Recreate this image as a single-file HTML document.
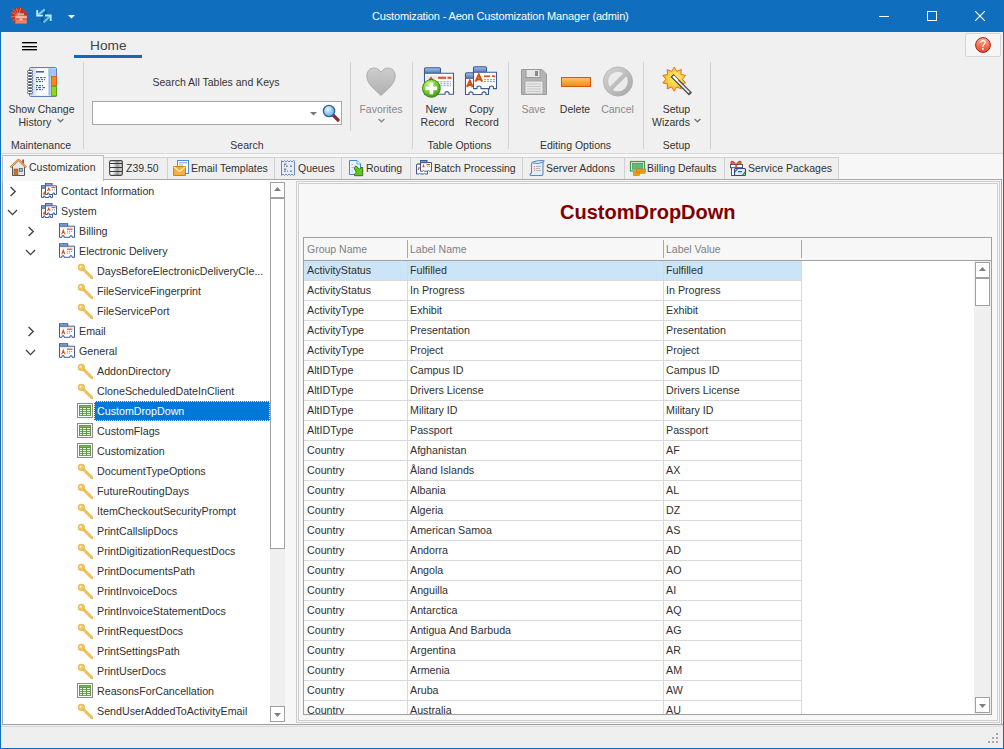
<!DOCTYPE html><html><head><meta charset="utf-8"><style>
*{margin:0;padding:0;box-sizing:border-box}
html,body{width:1004px;height:749px;overflow:hidden;background:#f0f0f0;font-family:"Liberation Sans", sans-serif;font-size:10.5px;color:#303030}
.a{position:absolute}
svg{display:block}
.t{position:absolute;white-space:nowrap;line-height:12px}
</style></head><body><div class="a" style="left:0;top:0;width:1004px;height:749px;background:#f0f0f0"></div><div class="a" style="left:0;top:0;width:1004px;height:32px;background:#106ebe"></div><div class="a" style="left:0;top:0;width:1px;height:749px;background:#106ebe"></div><div class="a" style="left:1003px;top:0;width:1px;height:749px;background:#106ebe"></div><div class="a" style="left:0;top:748px;width:1004px;height:1px;background:#106ebe"></div><svg class="a" style="left:8px;top:5px" width="22" height="22" viewBox="8 5 22 22"><circle cx="19" cy="15.7" r="7.9" fill="#c7321a"/><path d="M19 15.7 L13 9.5 M19 15.7 L16.5 8.3 M19 15.7 L20.5 8 M19 15.7 L11.5 12.5 M19 15.7 L11 17" stroke="#e8876c" stroke-width="0.8"/><path d="M19 15.7 L12.5 21" stroke="#e8876c" stroke-width="0.6"/><rect x="15.3" y="15.8" width="11.5" height="7.8" fill="#f47d62"/><rect x="15.3" y="15.8" width="11.5" height="2.6" fill="#f9b4a0"/><rect x="15.3" y="18.6" width="11.5" height="0.9" fill="#c9402a"/><rect x="17.5" y="13.3" width="6.5" height="2" fill="#b8b8b8"/><ellipse cx="21" cy="19.4" rx="1.7" ry="1.1" fill="#c8c8c8"/></svg><svg class="a" style="left:34px;top:6px" width="20" height="20" viewBox="34 6 20 20"><path d="M44.5 9.5 Q47.5 12 44.5 15.5" stroke="#0d4f78" stroke-width="1.6" fill="none"/><path d="M43 22 Q40.5 19.5 42.8 16.3" stroke="#0d4f78" stroke-width="1.6" fill="none"/><path d="M44.8 9.3 L38 15" stroke="#72d0f5" stroke-width="2.2"/><path d="M37.2 10 V15.6 H42.8" stroke="#c6f0ff" stroke-width="1.8" fill="none"/><path d="M43.5 22.5 L50 16.3" stroke="#5cc4ee" stroke-width="2.2"/><path d="M45 15.5 H50.7 V21" stroke="#b6ecff" stroke-width="1.8" fill="none"/></svg><svg class="a" style="left:68px;top:15px" width="7" height="4" viewBox="0 0 7 4"><path d="M0 0 H7 L3.5 3.5 Z" fill="#fff"/></svg><div class="t" style="left:372px;top:10px;color:#fff;font-size:11px;letter-spacing:-0.15px">Customization - Aeon Customization Manager (admin)</div><div class="a" style="left:879px;top:16px;width:10px;height:1px;background:#fff"></div><div class="a" style="left:927px;top:11px;width:10px;height:10px;border:1px solid #fff"></div><svg class="a" style="left:975px;top:11px" width="10" height="10" viewBox="0 0 10 10"><path d="M0 0 L10 10 M10 0 L0 10" stroke="#fff" stroke-width="1.1"/></svg><div class="a" style="left:22px;top:42px;width:15px;height:1px;background:#000;box-shadow:0 1px 0 rgba(0,0,0,0.35)"></div><div class="a" style="left:22px;top:46px;width:15px;height:1px;background:#000;box-shadow:0 1px 0 rgba(0,0,0,0.35)"></div><div class="a" style="left:22px;top:49px;width:15px;height:1px;background:#000;box-shadow:0 1px 0 rgba(0,0,0,0.35)"></div><div class="t" style="left:90px;top:40px;font-size:13.7px;color:#444">Home</div><div class="a" style="left:74px;top:55px;width:68px;height:3px;background:#1468bc"></div><div class="a" style="left:965px;top:33px;width:36px;height:24px;background:#f6f6f6;border:1px solid #d6d6d6;border-radius:2px"></div><svg class="a" style="left:974px;top:36px" width="18" height="18" viewBox="0 0 18 18"><defs><linearGradient id="hg" x1="0" y1="0" x2="0" y2="1"><stop offset="0" stop-color="#fbb196"/><stop offset="0.5" stop-color="#f27755"/><stop offset="1" stop-color="#e4502c"/></linearGradient></defs><circle cx="9" cy="9" r="7.4" fill="url(#hg)" stroke="#a81a10" stroke-width="1"/><path d="M6.9 6.7 Q6.9 4.6 9.1 4.6 Q11.2 4.6 11.2 6.6 Q11.2 7.8 9.8 8.6 Q9 9.2 9 11" stroke="#fff" stroke-width="1.2" fill="none"/><circle cx="8.9" cy="13" r="0.9" fill="#fff"/></svg><div class="a" style="left:83px;top:62px;width:1px;height:87px;background:#d2d2d2"></div><div class="a" style="left:350px;top:62px;width:1px;height:69px;background:#d2d2d2"></div><div class="a" style="left:412px;top:62px;width:1px;height:87px;background:#d2d2d2"></div><div class="a" style="left:508px;top:62px;width:1px;height:87px;background:#d2d2d2"></div><div class="a" style="left:643px;top:62px;width:1px;height:87px;background:#d2d2d2"></div><div class="a" style="left:710px;top:62px;width:1px;height:87px;background:#d2d2d2"></div><svg class="a" style="left:24px;top:64px" width="36" height="36" viewBox="24 64 36 36"><defs><linearGradient id="nb" x1="0" x2="1"><stop offset="0" stop-color="#b9c8e4"/><stop offset="0.45" stop-color="#fff"/></linearGradient></defs><rect x="29.5" y="67.5" width="27" height="29" rx="1.2" fill="#dbe6f6" stroke="#5b7fb8" stroke-width="1"/><rect x="30.5" y="68.5" width="18" height="27" fill="url(#nb)"/><rect x="48.5" y="68.5" width="7.5" height="8" fill="#a8c4ee"/><rect x="48.5" y="68.5" width="2" height="27" fill="#9dbbe8"/><rect x="51.5" y="76.5" width="5" height="9" fill="#f58a12" stroke="#d65a0a" stroke-width="0.8"/><rect x="51.5" y="86.5" width="5" height="9.5" fill="#8ed81a" stroke="#5a9a12" stroke-width="0.8"/><rect x="36" y="71" width="8" height="1.6" fill="#3f66b0"/><rect x="36" y="77" width="3" height="1.2" fill="#3f66b0"/><rect x="40" y="77" width="2.5" height="1.2" fill="#3f66b0"/><rect x="43.5" y="77" width="2.0" height="1.2" fill="#3f66b0"/><rect x="36" y="79" width="1" height="1.2" fill="#3f66b0"/><rect x="38" y="79" width="2" height="1.2" fill="#3f66b0"/><rect x="41" y="79" width="2" height="1.2" fill="#3f66b0"/><rect x="44" y="79" width="1" height="1.2" fill="#3f66b0"/><rect x="36" y="81" width="2" height="1.2" fill="#3f66b0"/><rect x="39" y="81" width="2" height="1.2" fill="#3f66b0"/><rect x="42" y="81" width="1" height="1.2" fill="#3f66b0"/><rect x="36" y="85" width="2" height="1.2" fill="#3f66b0"/><rect x="39" y="85" width="2" height="1.2" fill="#3f66b0"/><rect x="42" y="85" width="1" height="1.2" fill="#3f66b0"/><rect x="36" y="87" width="1" height="1.2" fill="#3f66b0"/><rect x="38" y="87" width="3" height="1.2" fill="#3f66b0"/><rect x="42.5" y="87" width="2.5" height="1.2" fill="#3f66b0"/><rect x="36" y="89" width="2" height="1.2" fill="#3f66b0"/><rect x="39" y="89" width="2" height="1.2" fill="#3f66b0"/><rect x="42" y="89" width="1" height="1.2" fill="#3f66b0"/><rect x="27.5" y="70.5" width="5" height="2.2" rx="1" fill="#fff" stroke="#3a4866" stroke-width="0.9"/><rect x="27.5" y="73.5" width="5" height="2.2" rx="1" fill="#fff" stroke="#3a4866" stroke-width="0.9"/><rect x="27.5" y="76.5" width="5" height="2.2" rx="1" fill="#fff" stroke="#3a4866" stroke-width="0.9"/><rect x="27.5" y="79.5" width="5" height="2.2" rx="1" fill="#fff" stroke="#3a4866" stroke-width="0.9"/><rect x="27.5" y="82.5" width="5" height="2.2" rx="1" fill="#fff" stroke="#3a4866" stroke-width="0.9"/><rect x="27.5" y="85.5" width="5" height="2.2" rx="1" fill="#fff" stroke="#3a4866" stroke-width="0.9"/><rect x="27.5" y="88.5" width="5" height="2.2" rx="1" fill="#fff" stroke="#3a4866" stroke-width="0.9"/><rect x="27.5" y="91.5" width="5" height="2.2" rx="1" fill="#fff" stroke="#3a4866" stroke-width="0.9"/></svg><div class="t" style="left:41.5px;top:103px;width:0;color:#333;"><div style="position:absolute;left:0;transform:translateX(-50%);white-space:nowrap">Show Change</div></div><div class="t" style="left:18.5px;top:116px;color:#333;">History</div><svg class="a" style="left:57px;top:118px" width="7" height="5" viewBox="0 0 7 5"><path d="M0.6 0.9 L3.5 3.8 L6.4 0.9" stroke="#777" stroke-width="1.4" fill="none"/></svg><div class="t" style="left:41px;top:139px;width:0;color:#333;"><div style="position:absolute;left:0;transform:translateX(-50%);white-space:nowrap">Maintenance</div></div><div class="t" style="left:216px;top:76px;width:0;color:#333;"><div style="position:absolute;left:0;transform:translateX(-50%);white-space:nowrap">Search All Tables and Keys</div></div><div class="a" style="left:92px;top:101px;width:250px;height:24px;background:#fff;border:1px solid #a8a8a8"></div><svg class="a" style="left:310px;top:112px" width="7" height="4" viewBox="0 0 7 4"><path d="M0 0 H7 L3.5 3.5 Z" fill="#777"/></svg><svg class="a" style="left:322px;top:104px" width="18" height="18" viewBox="0 0 18 18"><defs><radialGradient id="mg" cx="0.4" cy="0.35" r="0.7"><stop offset="0" stop-color="#e8f6ff"/><stop offset="1" stop-color="#5fa6dd"/></radialGradient></defs><path d="M10.5 10.5 L16 16" stroke="#8a2c2c" stroke-width="3.2" stroke-linecap="round"/><circle cx="7" cy="7" r="5.6" fill="url(#mg)" stroke="#2a63a8" stroke-width="1.4"/></svg><div class="t" style="left:247px;top:139px;width:0;color:#333;"><div style="position:absolute;left:0;transform:translateX(-50%);white-space:nowrap">Search</div></div><svg class="a" style="left:365px;top:67px" width="32" height="31" viewBox="0 0 32 31"><defs><linearGradient id="hrt" x1="0" y1="0" x2="0" y2="1"><stop offset="0" stop-color="#cdcdcd"/><stop offset="1" stop-color="#b0b0b0"/></linearGradient></defs><path d="M16 28.5 C9 22 1.8 16.5 1.8 8.8 C1.8 4 5.2 1 9.2 1 C12.6 1 14.8 3.2 16 5.4 C17.2 3.2 19.4 1 22.8 1 C26.8 1 30.2 4 30.2 8.8 C30.2 16.5 23 22 16 28.5 Z" fill="url(#hrt)" stroke="#a8a8a8" stroke-width="0.9"/></svg><div class="t" style="left:381px;top:103px;width:0;color:#8a8a8a;"><div style="position:absolute;left:0;transform:translateX(-50%);white-space:nowrap">Favorites</div></div><svg class="a" style="left:378px;top:118px" width="7" height="5" viewBox="0 0 7 5"><path d="M0.6 0.9 L3.5 3.8 L6.4 0.9" stroke="#8a8a8a" stroke-width="1.4" fill="none"/></svg><svg class="a" style="left:418px;top:62px" width="40" height="40" viewBox="418 62 40 40"><defs><linearGradient id="tb42473" x1="0" y1="0" x2="0" y2="1"><stop offset="0" stop-color="#a6c2ec"/><stop offset="1" stop-color="#4f74b4"/></linearGradient></defs><rect x="424.5" y="67.7" width="16" height="6" rx="1.2" fill="url(#tb42473)" stroke="#3d5a8c" stroke-width="1.1"/><path d="M424.5 73.2 H453.5 V94.3 H449 V92.7 Q447.0 90.7 445 92.7 V94.3 H424.5 Z" fill="#fff" stroke="#3d5a8c" stroke-width="1.1"/><rect x="426" y="75.5" width="26.5" height="3.6" fill="#e6e8ee"/><path d="M428.5 80 L431 76.5 L433.5 80 Z" fill="#d84a10"/><rect x="438" y="76.8" width="8" height="2" fill="#e0541a"/><rect x="447.5" y="76.8" width="4" height="2" fill="#e0541a"/><path d="M437 81.8 H451 M437 83.8 H451 M437 85.8 H451" stroke="#8a9ab8" stroke-width="1" stroke-dasharray="2.2 1"/><defs><radialGradient id="gp" cx="0.35" cy="0.25" r="0.8"><stop offset="0" stop-color="#c6f27a"/><stop offset="0.6" stop-color="#6cc82a"/><stop offset="1" stop-color="#3a9a12"/></radialGradient></defs><circle cx="431.4" cy="88.4" r="8.9" fill="url(#gp)" stroke="#2e8010" stroke-width="0.9"/><path d="M431.4 82.6 V94.2 M425.6 88.4 H437.2" stroke="#fff" stroke-width="3.6"/></svg><svg class="a" style="left:461px;top:62px" width="40" height="40" viewBox="461 62 40 40"><defs><linearGradient id="tb46578" x1="0" y1="0" x2="0" y2="1"><stop offset="0" stop-color="#a6c2ec"/><stop offset="1" stop-color="#4f74b4"/></linearGradient></defs><rect x="465.5" y="72.7" width="12" height="6" rx="1.2" fill="url(#tb46578)" stroke="#3d5a8c" stroke-width="1.1"/><path d="M465.5 78.2 H488.5 V94.5 H486 V92.9 Q484.0 90.9 482 92.9 V94.5 H473 V92.9 Q471.0 90.9 469 92.9 V94.5 H465.5 Z" fill="#fff" stroke="#3d5a8c" stroke-width="1.1"/><path d="M467 87 L469.8 80.8 L472.6 87 M468.2 85 H471.4" stroke="#d84a10" stroke-width="2" fill="none"/><defs><linearGradient id="tb47372" x1="0" y1="0" x2="0" y2="1"><stop offset="0" stop-color="#a6c2ec"/><stop offset="1" stop-color="#4f74b4"/></linearGradient></defs><rect x="473.5" y="66.7" width="13" height="6" rx="1.2" fill="url(#tb47372)" stroke="#3d5a8c" stroke-width="1.1"/><path d="M473.5 72.2 H496.5 V88.6 H493.5 V87.0 Q491.5 85.0 489.5 87.0 V88.6 H481 V87.0 Q479.0 85.0 477 87.0 V88.6 H473.5 Z" fill="#fff" stroke="#3d5a8c" stroke-width="1.1"/><path d="M475.5 81.6 L478.8 74.6 L482.1 81.6 M477 79.4 H480.6" stroke="#d84a10" stroke-width="2.1" fill="none"/><rect x="484" y="75.4" width="6" height="1.8" fill="#e0541a"/><rect x="492" y="75.4" width="3.2" height="1.8" fill="#e0541a"/><path d="M484 79.6 H495 M484 81.6 H495" stroke="#8a9ab8" stroke-width="1" stroke-dasharray="2 1"/></svg><div class="t" style="left:436px;top:103px;width:0;color:#333;"><div style="position:absolute;left:0;transform:translateX(-50%);white-space:nowrap">New</div></div><div class="t" style="left:437.5px;top:116px;width:0;color:#333;"><div style="position:absolute;left:0;transform:translateX(-50%);white-space:nowrap">Record</div></div><div class="t" style="left:481.5px;top:103px;width:0;color:#333;"><div style="position:absolute;left:0;transform:translateX(-50%);white-space:nowrap">Copy</div></div><div class="t" style="left:482px;top:116px;width:0;color:#333;"><div style="position:absolute;left:0;transform:translateX(-50%);white-space:nowrap">Record</div></div><div class="t" style="left:459.5px;top:139px;width:0;color:#333;"><div style="position:absolute;left:0;transform:translateX(-50%);white-space:nowrap">Table Options</div></div><svg class="a" style="left:520px;top:68px" width="28" height="28" viewBox="0 0 28 28"><path d="M1.5 1.5 H22 L26.5 6 V26.5 H1.5 Z" fill="#b3b3b3" stroke="#9a9a9a"/><rect x="6" y="1.5" width="14" height="8" fill="#e6e6e6" stroke="#9a9a9a"/><rect x="15" y="3" width="3" height="5" fill="#888"/><rect x="5" y="13" width="18" height="13" fill="#e8e8e8" stroke="#a8a8a8"/><path d="M7 16 H21 M7 18.5 H21 M7 21 H21 M7 23.5 H21" stroke="#c6c6c6" stroke-width="1"/></svg><div class="t" style="left:533.5px;top:103px;width:0;color:#8a8a8a;"><div style="position:absolute;left:0;transform:translateX(-50%);white-space:nowrap">Save</div></div><svg class="a" style="left:560px;top:76px" width="32" height="12" viewBox="0 0 32 12"><defs><linearGradient id="dl" x1="0" y1="0" x2="0" y2="1"><stop offset="0" stop-color="#ffc46a"/><stop offset="1" stop-color="#f08a10"/></linearGradient></defs><rect x="1.5" y="1.5" width="29" height="9" fill="url(#dl)" stroke="#d4580c" stroke-width="1"/></svg><div class="t" style="left:575px;top:103px;width:0;color:#333;"><div style="position:absolute;left:0;transform:translateX(-50%);white-space:nowrap">Delete</div></div><svg class="a" style="left:602px;top:66px" width="32" height="31" viewBox="0 0 32 31"><defs><linearGradient id="cg" x1="0" y1="0" x2="1" y2="1"><stop offset="0" stop-color="#d6d6d6"/><stop offset="1" stop-color="#a6a6a6"/></linearGradient></defs><circle cx="16" cy="15.5" r="14.6" fill="url(#cg)" stroke="#b0b0b0" stroke-width="0.8"/><circle cx="16" cy="15.5" r="9.8" fill="#ebebeb"/><path d="M23.5 8 L8.5 23" stroke="url(#cg)" stroke-width="4.2"/></svg><div class="t" style="left:617.5px;top:103px;width:0;color:#8a8a8a;"><div style="position:absolute;left:0;transform:translateX(-50%);white-space:nowrap">Cancel</div></div><div class="t" style="left:575.5px;top:139px;width:0;color:#333;"><div style="position:absolute;left:0;transform:translateX(-50%);white-space:nowrap">Editing Options</div></div><svg class="a" style="left:656px;top:62px" width="40" height="40" viewBox="656 62 40 40"><defs><radialGradient id="st" cx="0.55" cy="0.45" r="0.6"><stop offset="0" stop-color="#fff27a"/><stop offset="0.7" stop-color="#fbc533"/><stop offset="1" stop-color="#f0a020"/></radialGradient></defs><path d="M674.20 67.20 L676.73 71.40 L681.25 69.49 L680.83 74.38 L685.61 75.49 L682.40 79.20 L685.61 82.91 L680.83 84.02 L681.25 88.91 L676.73 87.00 L674.20 91.20 L671.67 87.00 L667.15 88.91 L667.57 84.02 L662.79 82.91 L666.00 79.20 L662.79 75.49 L667.57 74.38 L667.15 69.49 L671.67 71.40 Z" fill="url(#st)" stroke="#dc6a14" stroke-width="0.9" stroke-linejoin="miter"/><path d="M673.5 77 L689 92.5" stroke="#4a4a4a" stroke-width="4.2" stroke-linecap="square"/><path d="M673.8 77.3 L688.6 92.1" stroke="#e8e8e8" stroke-width="1.8" stroke-linecap="square"/><path d="M673.8 76.8 L677 80" stroke="#fff" stroke-width="2" stroke-linecap="square"/></svg><div class="t" style="left:676.5px;top:103px;width:0;color:#333;"><div style="position:absolute;left:0;transform:translateX(-50%);white-space:nowrap">Setup</div></div><div class="t" style="left:652px;top:116px;color:#333;">Wizards</div><svg class="a" style="left:694px;top:118px" width="7" height="5" viewBox="0 0 7 5"><path d="M0.6 0.9 L3.5 3.8 L6.4 0.9" stroke="#777" stroke-width="1.4" fill="none"/></svg><div class="t" style="left:676.5px;top:139px;width:0;color:#333;"><div style="position:absolute;left:0;transform:translateX(-50%);white-space:nowrap">Setup</div></div><div class="a" style="left:1px;top:153px;width:1002px;height:1px;background:#d6d6d6"></div><div class="a" style="left:1px;top:154px;width:1002px;height:25px;background:#f7f7f7"></div><div class="a" style="left:103px;top:179px;width:899px;height:1px;background:#a8a8a8"></div><div class="a" style="left:2px;top:180px;width:286px;height:545px;background:#fff"></div><div class="a" style="left:2px;top:180px;width:1px;height:545px;background:#a8a8a8"></div><div class="a" style="left:2px;top:155px;width:102px;height:26px;background:#f7f7f7;border:1px solid #bdbdbd;border-bottom:none"></div><svg class="a" style="left:8px;top:157px" width="20" height="20" viewBox="8 157 20 20"><rect x="22.3" y="159.5" width="1.6" height="4.5" fill="#c0282a"/><path d="M12.5 166 V175.5 H24.5 V166 L18.5 160.5 Z" fill="#e8e8e8" stroke="#555" stroke-width="1"/><path d="M10.3 167.5 L18.5 159.8 L26.2 167.5" fill="none" stroke="#c4843c" stroke-width="2.2" stroke-linejoin="round"/><path d="M10.3 167.5 L18.5 159.8 L26.2 167.5" fill="none" stroke="#f0c890" stroke-width="0.8"/><rect x="14" y="169" width="4" height="6.5" fill="#c07a30" stroke="#7a4a1a" stroke-width="0.5"/><rect x="19.5" y="168.5" width="3" height="3" fill="#8cc4f0" stroke="#555" stroke-width="0.7"/></svg><div class="t" style="left:29px;top:161px;color:#333">Customization</div><div class="a" style="left:104px;top:157px;width:64px;height:22px;background:#efefef;border:1px solid #d0d0d0;border-bottom:none;border-left:none"></div><svg class="a" style="left:107px;top:158px" width="20" height="20" viewBox="107 158 20 20"><defs><linearGradient id="dbg" x1="0" x2="1"><stop offset="0" stop-color="#fff"/><stop offset="0.25" stop-color="#f4f4f4"/><stop offset="0.6" stop-color="#9a9a9a"/><stop offset="0.9" stop-color="#d8d8d8"/><stop offset="1" stop-color="#aaa"/></linearGradient></defs><rect x="109.6" y="160.6" width="12.8" height="14.8" rx="1.6" fill="url(#dbg)" stroke="#444" stroke-width="1.1"/><path d="M110 163.5 H122 M110 167.5 H122 M110 171.5 H122" stroke="#3a3a3a" stroke-width="1"/></svg><div class="t" style="left:126px;top:162px;color:#333">Z39.50</div><div class="a" style="left:168px;top:157px;width:107px;height:22px;background:#efefef;border:1px solid #d0d0d0;border-bottom:none;border-left:none"></div><svg class="a" style="left:171px;top:158px" width="20" height="20" viewBox="171 158 20 20"><rect x="177.5" y="160.5" width="11" height="13" fill="#fff" stroke="#4d8ad8"/><rect x="179" y="162" width="8" height="1.5" fill="#9ec0ea"/><rect x="179" y="164.5" width="4" height="1" fill="#9ab"/><path d="M173.5 166.5 H185.5 V175.5 H173.5 Z" fill="#f4b040" stroke="#cf8412"/><path d="M173.8 166.8 L179.5 171.5 L185.2 166.8" fill="none" stroke="#fff3d0" stroke-width="1.1"/></svg><div class="t" style="left:191px;top:162px;color:#333">Email Templates</div><div class="a" style="left:275px;top:157px;width:67px;height:22px;background:#efefef;border:1px solid #d0d0d0;border-bottom:none;border-left:none"></div><svg class="a" style="left:279px;top:158px" width="20" height="20" viewBox="279 158 20 20"><path d="M281.5 160.5 L283 162 L284.5 160.5 L286 162 L287.5 160.5 L289 162 L290.5 160.5 L292 162 L293.5 160.5 L294.5 161 V175 L293.5 175.5 L292 174 L290.5 175.5 L289 174 L287.5 175.5 L286 174 L284.5 175.5 L283 174 L281.5 175.5 Z" fill="#e6edf9" stroke="#6b8bc0" stroke-width="1"/><rect x="284" y="163.6" width="2.2" height="1.2" fill="#55698a"/><rect x="284" y="165.6" width="0.9" height="1.1" fill="#55698a"/><rect x="286" y="165.6" width="1.8" height="1.1" fill="#55698a"/><rect x="290" y="165.6" width="2" height="1.1" fill="#55698a"/><rect x="284" y="168.6" width="2.2" height="1.2" fill="#55698a"/><rect x="284" y="170.6" width="1.8" height="1.1" fill="#55698a"/><rect x="287" y="170.6" width="0.9" height="1.1" fill="#55698a"/><rect x="290" y="170.6" width="2" height="1.1" fill="#55698a"/></svg><div class="t" style="left:298px;top:162px;color:#333">Queues</div><div class="a" style="left:342px;top:157px;width:69px;height:22px;background:#efefef;border:1px solid #d0d0d0;border-bottom:none;border-left:none"></div><svg class="a" style="left:347px;top:158px" width="20" height="20" viewBox="347 158 20 20"><path d="M349.5 160.5 H357 L360.5 164 V174.5 H349.5 Z" fill="#eaf3fc" stroke="#3c8ad4" stroke-width="1"/><path d="M357 160.5 V164 H360.5" fill="#fff" stroke="#3c8ad4" stroke-width="0.8"/><path d="M351.5 164.5 H353 M351.5 167.5 H353 M351.5 171 H353" stroke="#9ab" stroke-width="0.8"/><path d="M354 167.8 L356 165.8 L359.5 169.3 L361 167.5 H362.7 V175.7 H354.5 V174 L356.3 172.5 Z" fill="#5fc81c" stroke="#2e6a12" stroke-width="0.9"/></svg><div class="t" style="left:366px;top:162px;color:#333">Routing</div><div class="a" style="left:411px;top:157px;width:112px;height:22px;background:#efefef;border:1px solid #d0d0d0;border-bottom:none;border-left:none"></div><svg class="a" style="left:414px;top:158px" width="20" height="20" viewBox="414 158 20 20"><path d="M416.5 164.5 H427.5 V174 H425.5 Q424.5 172.5 423.5 174 H420.5 Q419.5 172.5 418.5 174 H416.5 Z" fill="#fff" stroke="#3d5a8c" stroke-width="1"/><rect x="417" y="163" width="4" height="1.8" fill="#7b9ad0"/><path d="M418.2 170 L419.2 167" stroke="#d9541e" stroke-width="1.3"/><path d="M420.5 162.5 H431.5 V171.2 H429.5 Q428.5 169.7 427.5 171.2 H424.5 Q423.5 169.7 422.5 171.2 H420.5 Z" fill="#fff" stroke="#3d5a8c" stroke-width="1"/><rect x="420.5" y="160.5" width="6.5" height="2.2" fill="#7b9ad0" stroke="#3d5a8c" stroke-width="1"/><path d="M422.2 167.2 L423.5 163.8 L424.8 167.2 Z" fill="#d9541e"/><rect x="426.5" y="164" width="3.5" height="1.2" fill="#d9541e"/><rect x="427" y="166.2" width="0.9" height="0.9" fill="#7a8aa8"/><rect x="429" y="166.2" width="0.9" height="0.9" fill="#7a8aa8"/></svg><div class="t" style="left:434px;top:162px;color:#333">Batch Processing</div><div class="a" style="left:523px;top:157px;width:102px;height:22px;background:#efefef;border:1px solid #d0d0d0;border-bottom:none;border-left:none"></div><svg class="a" style="left:527px;top:158px" width="20" height="20" viewBox="527 158 20 20"><path d="M531 175.5 H542 Q543 175 543 173.5 V162.5 L544 160.8 Q540 160 533 162 Q531.5 162.5 531.5 164 V173 Q530 173.5 530 174.5 Q530 175.5 531 175.5 Z" fill="#e4eefb" stroke="#5e88bd" stroke-width="1.1"/><path d="M533 163 Q538 164.5 543 162" fill="none" stroke="#5e88bd" stroke-width="1"/><circle cx="534.5" cy="166.5" r="0.7" fill="#f0904a"/><circle cx="534.5" cy="168.5" r="0.7" fill="#f0904a"/><circle cx="534.5" cy="170.5" r="0.7" fill="#f0904a"/><path d="M536 166.5 H541 M536 168.5 H540 M536 170.5 H541" stroke="#9aa8b8" stroke-width="0.8"/></svg><div class="t" style="left:546px;top:162px;color:#333">Server Addons</div><div class="a" style="left:625px;top:157px;width:100px;height:22px;background:#efefef;border:1px solid #d0d0d0;border-bottom:none;border-left:none"></div><svg class="a" style="left:628px;top:158px" width="20" height="20" viewBox="628 158 20 20"><rect x="630.5" y="161.5" width="14" height="9.5" fill="#eaf4ea" stroke="#3c9a50" stroke-width="1.2"/><rect x="632.3" y="163.2" width="10.5" height="6" fill="#6ab57a" stroke="#3c8a4e" stroke-width="0.6"/><rect x="636.5" y="169" width="9" height="3" fill="#f29a10" stroke="#e07000" stroke-width="0.6"/><rect x="636.5" y="172" width="9" height="2" fill="#f0a020"/><rect x="633.5" y="172.5" width="6" height="3" fill="#f29a10" stroke="#e07000" stroke-width="0.6"/></svg><div class="t" style="left:647px;top:162px;color:#333">Billing Defaults</div><div class="a" style="left:725px;top:157px;width:114px;height:22px;background:#efefef;border:1px solid #d0d0d0;border-bottom:none;border-left:none"></div><svg class="a" style="left:728px;top:158px" width="20" height="20" viewBox="728 158 20 20"><path d="M736 165 Q733 160 731 162 Q730.5 165 736 165 Q739 160 741 162 Q741.5 165 736 165" fill="#f07060" stroke="#d83a2a" stroke-width="1.1"/><rect x="731.5" y="167.5" width="9" height="8" fill="#fff" stroke="#555" stroke-width="1"/><rect x="730.5" y="164.5" width="12" height="3.2" fill="#fff" stroke="#555" stroke-width="1"/><rect x="735.3" y="164" width="1.6" height="8" fill="#d83a2a"/><rect x="734.5" y="168.5" width="11" height="7" rx="1" fill="#e0ecfa" stroke="#3a3aa8" stroke-width="1.1"/><path d="M734.8 172 L737.5 168.8 M742.5 175.3 L745.3 172" stroke="#1a9a1a" stroke-width="1.3"/><rect x="738" y="171" width="4" height="1.3" fill="#4a5ad0"/></svg><div class="t" style="left:748px;top:162px;color:#333">Service Packages</div><div class="a" style="left:9px;top:186px"><svg width="8" height="11" viewBox="0 0 8 11"><path d="M1.6 1 L6.2 5.5 L1.6 10" stroke="#404040" stroke-width="1.35" fill="none"/></svg></div><div class="a" style="left:41px;top:183px"><svg width="17" height="16" viewBox="0 0 17 16"><rect x="0.5" y="2.7" width="5.5" height="3" fill="#89a6d8" stroke="#3f5f94" stroke-width="1"/><path d="M0.5 5.2 H11.5 V14.5 H9.5 V13.0 H8 V14.5 H4 V13.0 H2.5 V14.5 H0.5 Z" fill="#fff" stroke="#3f5f94" stroke-width="1"/><path d="M1.8 11.5 L3.3 7.8 L4.5 11.5 Z" fill="#d8501a"/><rect x="4.5" y="0.2999999999999998" width="6.5" height="3" fill="#89a6d8" stroke="#3f5f94" stroke-width="1"/><path d="M4.5 2.8 H15.5 V11.5 H13.5 V10.0 H12 V11.5 H8 V10.0 H6.5 V11.5 H4.5 Z" fill="#fff" stroke="#3f5f94" stroke-width="1"/><path d="M6 8 L7.8 3.8 L9.6 8 H8.6 L8.3 7.2 H7.3 L7 8 Z" fill="#d8501a"/><rect x="10.5" y="4" width="4" height="1.1" fill="#e0541a"/><rect x="11" y="6.3" width="1" height="1" fill="#8a9ab8"/><rect x="13" y="6.3" width="1" height="1" fill="#8a9ab8"/></svg></div><div class="t" style="left:61px;top:185px;color:#303030;font-size:10.7px">Contact Information</div><div class="a" style="left:7px;top:209px"><svg width="11" height="7" viewBox="0 0 11 7"><path d="M1 1 L5.5 5.6 L10 1" stroke="#404040" stroke-width="1.35" fill="none"/></svg></div><div class="a" style="left:41px;top:203px"><svg width="17" height="16" viewBox="0 0 17 16"><rect x="0.5" y="2.7" width="5.5" height="3" fill="#89a6d8" stroke="#3f5f94" stroke-width="1"/><path d="M0.5 5.2 H11.5 V14.5 H9.5 V13.0 H8 V14.5 H4 V13.0 H2.5 V14.5 H0.5 Z" fill="#fff" stroke="#3f5f94" stroke-width="1"/><path d="M1.8 11.5 L3.3 7.8 L4.5 11.5 Z" fill="#d8501a"/><rect x="4.5" y="0.2999999999999998" width="6.5" height="3" fill="#89a6d8" stroke="#3f5f94" stroke-width="1"/><path d="M4.5 2.8 H15.5 V11.5 H13.5 V10.0 H12 V11.5 H8 V10.0 H6.5 V11.5 H4.5 Z" fill="#fff" stroke="#3f5f94" stroke-width="1"/><path d="M6 8 L7.8 3.8 L9.6 8 H8.6 L8.3 7.2 H7.3 L7 8 Z" fill="#d8501a"/><rect x="10.5" y="4" width="4" height="1.1" fill="#e0541a"/><rect x="11" y="6.3" width="1" height="1" fill="#8a9ab8"/><rect x="13" y="6.3" width="1" height="1" fill="#8a9ab8"/></svg></div><div class="t" style="left:61px;top:205px;color:#303030;font-size:10.7px">System</div><div class="a" style="left:27px;top:226px"><svg width="8" height="11" viewBox="0 0 8 11"><path d="M1.6 1 L6.2 5.5 L1.6 10" stroke="#404040" stroke-width="1.35" fill="none"/></svg></div><div class="a" style="left:59px;top:223px"><svg width="16" height="16" viewBox="0 0 16 16"><rect x="0.5" y="0.7000000000000002" width="8.2" height="3" fill="#89a6d8" stroke="#3f5f94" stroke-width="1"/><path d="M0.5 3.2 H15.5 V14.3 H13 V12.8 H11 V14.3 H5 V12.8 H3 V14.3 H0.5 Z" fill="#fff" stroke="#3f5f94" stroke-width="1"/><rect x="1.5" y="4.2" width="13" height="1.2" fill="#dfe5f0"/><path d="M2.2 11.2 L4.3 5.8 L6.4 11.2 H5.2 L4.8 10 H3.8 L3.4 11.2 Z" fill="#d8501a"/><rect x="8" y="5.6" width="5.5" height="1.2" fill="#e0541a"/><rect x="8" y="7.8" width="1.2" height="1" fill="#8a9ab8"/><rect x="10" y="7.8" width="1.2" height="1" fill="#8a9ab8"/><rect x="12" y="7.8" width="1.2" height="1" fill="#8a9ab8"/><rect x="8" y="9.6" width="1.2" height="1" fill="#8a9ab8"/><rect x="10" y="9.6" width="1.2" height="1" fill="#8a9ab8"/></svg></div><div class="t" style="left:79px;top:225px;color:#303030;font-size:10.7px">Billing</div><div class="a" style="left:25px;top:249px"><svg width="11" height="7" viewBox="0 0 11 7"><path d="M1 1 L5.5 5.6 L10 1" stroke="#404040" stroke-width="1.35" fill="none"/></svg></div><div class="a" style="left:59px;top:243px"><svg width="16" height="16" viewBox="0 0 16 16"><rect x="0.5" y="0.7000000000000002" width="8.2" height="3" fill="#89a6d8" stroke="#3f5f94" stroke-width="1"/><path d="M0.5 3.2 H15.5 V14.3 H13 V12.8 H11 V14.3 H5 V12.8 H3 V14.3 H0.5 Z" fill="#fff" stroke="#3f5f94" stroke-width="1"/><rect x="1.5" y="4.2" width="13" height="1.2" fill="#dfe5f0"/><path d="M2.2 11.2 L4.3 5.8 L6.4 11.2 H5.2 L4.8 10 H3.8 L3.4 11.2 Z" fill="#d8501a"/><rect x="8" y="5.6" width="5.5" height="1.2" fill="#e0541a"/><rect x="8" y="7.8" width="1.2" height="1" fill="#8a9ab8"/><rect x="10" y="7.8" width="1.2" height="1" fill="#8a9ab8"/><rect x="12" y="7.8" width="1.2" height="1" fill="#8a9ab8"/><rect x="8" y="9.6" width="1.2" height="1" fill="#8a9ab8"/><rect x="10" y="9.6" width="1.2" height="1" fill="#8a9ab8"/></svg></div><div class="t" style="left:79px;top:245px;color:#303030;font-size:10.7px">Electronic Delivery</div><div class="a" style="left:77px;top:263px"><svg width="16" height="16" viewBox="0 0 16 16"><path d="M6.3 6.3 L14.8 14.8" stroke="#dcae4a" stroke-width="2.8" stroke-linecap="round"/><path d="M6.3 6.3 L14.8 14.8" stroke="#f4c95c" stroke-width="1.6" stroke-linecap="round"/><circle cx="4.4" cy="4.4" r="3.3" fill="#f3c658" stroke="#e2b04a" stroke-width="0.7"/><ellipse cx="3.6" cy="3.7" rx="1.3" ry="1" fill="#fafafa" stroke="#d8c8a0" stroke-width="0.3" transform="rotate(-35 3.6 3.7)"/></svg></div><div class="t" style="left:97px;top:265px;color:#303030;font-size:10.7px">DaysBeforeElectronicDeliveryCle...</div><div class="a" style="left:77px;top:283px"><svg width="16" height="16" viewBox="0 0 16 16"><path d="M6.3 6.3 L14.8 14.8" stroke="#dcae4a" stroke-width="2.8" stroke-linecap="round"/><path d="M6.3 6.3 L14.8 14.8" stroke="#f4c95c" stroke-width="1.6" stroke-linecap="round"/><circle cx="4.4" cy="4.4" r="3.3" fill="#f3c658" stroke="#e2b04a" stroke-width="0.7"/><ellipse cx="3.6" cy="3.7" rx="1.3" ry="1" fill="#fafafa" stroke="#d8c8a0" stroke-width="0.3" transform="rotate(-35 3.6 3.7)"/></svg></div><div class="t" style="left:97px;top:285px;color:#303030;font-size:10.7px">FileServiceFingerprint</div><div class="a" style="left:77px;top:303px"><svg width="16" height="16" viewBox="0 0 16 16"><path d="M6.3 6.3 L14.8 14.8" stroke="#dcae4a" stroke-width="2.8" stroke-linecap="round"/><path d="M6.3 6.3 L14.8 14.8" stroke="#f4c95c" stroke-width="1.6" stroke-linecap="round"/><circle cx="4.4" cy="4.4" r="3.3" fill="#f3c658" stroke="#e2b04a" stroke-width="0.7"/><ellipse cx="3.6" cy="3.7" rx="1.3" ry="1" fill="#fafafa" stroke="#d8c8a0" stroke-width="0.3" transform="rotate(-35 3.6 3.7)"/></svg></div><div class="t" style="left:97px;top:305px;color:#303030;font-size:10.7px">FileServicePort</div><div class="a" style="left:27px;top:326px"><svg width="8" height="11" viewBox="0 0 8 11"><path d="M1.6 1 L6.2 5.5 L1.6 10" stroke="#404040" stroke-width="1.35" fill="none"/></svg></div><div class="a" style="left:59px;top:323px"><svg width="16" height="16" viewBox="0 0 16 16"><rect x="0.5" y="0.7000000000000002" width="8.2" height="3" fill="#89a6d8" stroke="#3f5f94" stroke-width="1"/><path d="M0.5 3.2 H15.5 V14.3 H13 V12.8 H11 V14.3 H5 V12.8 H3 V14.3 H0.5 Z" fill="#fff" stroke="#3f5f94" stroke-width="1"/><rect x="1.5" y="4.2" width="13" height="1.2" fill="#dfe5f0"/><path d="M2.2 11.2 L4.3 5.8 L6.4 11.2 H5.2 L4.8 10 H3.8 L3.4 11.2 Z" fill="#d8501a"/><rect x="8" y="5.6" width="5.5" height="1.2" fill="#e0541a"/><rect x="8" y="7.8" width="1.2" height="1" fill="#8a9ab8"/><rect x="10" y="7.8" width="1.2" height="1" fill="#8a9ab8"/><rect x="12" y="7.8" width="1.2" height="1" fill="#8a9ab8"/><rect x="8" y="9.6" width="1.2" height="1" fill="#8a9ab8"/><rect x="10" y="9.6" width="1.2" height="1" fill="#8a9ab8"/></svg></div><div class="t" style="left:79px;top:325px;color:#303030;font-size:10.7px">Email</div><div class="a" style="left:25px;top:349px"><svg width="11" height="7" viewBox="0 0 11 7"><path d="M1 1 L5.5 5.6 L10 1" stroke="#404040" stroke-width="1.35" fill="none"/></svg></div><div class="a" style="left:59px;top:343px"><svg width="16" height="16" viewBox="0 0 16 16"><rect x="0.5" y="0.7000000000000002" width="8.2" height="3" fill="#89a6d8" stroke="#3f5f94" stroke-width="1"/><path d="M0.5 3.2 H15.5 V14.3 H13 V12.8 H11 V14.3 H5 V12.8 H3 V14.3 H0.5 Z" fill="#fff" stroke="#3f5f94" stroke-width="1"/><rect x="1.5" y="4.2" width="13" height="1.2" fill="#dfe5f0"/><path d="M2.2 11.2 L4.3 5.8 L6.4 11.2 H5.2 L4.8 10 H3.8 L3.4 11.2 Z" fill="#d8501a"/><rect x="8" y="5.6" width="5.5" height="1.2" fill="#e0541a"/><rect x="8" y="7.8" width="1.2" height="1" fill="#8a9ab8"/><rect x="10" y="7.8" width="1.2" height="1" fill="#8a9ab8"/><rect x="12" y="7.8" width="1.2" height="1" fill="#8a9ab8"/><rect x="8" y="9.6" width="1.2" height="1" fill="#8a9ab8"/><rect x="10" y="9.6" width="1.2" height="1" fill="#8a9ab8"/></svg></div><div class="t" style="left:79px;top:345px;color:#303030;font-size:10.7px">General</div><div class="a" style="left:77px;top:363px"><svg width="16" height="16" viewBox="0 0 16 16"><path d="M6.3 6.3 L14.8 14.8" stroke="#dcae4a" stroke-width="2.8" stroke-linecap="round"/><path d="M6.3 6.3 L14.8 14.8" stroke="#f4c95c" stroke-width="1.6" stroke-linecap="round"/><circle cx="4.4" cy="4.4" r="3.3" fill="#f3c658" stroke="#e2b04a" stroke-width="0.7"/><ellipse cx="3.6" cy="3.7" rx="1.3" ry="1" fill="#fafafa" stroke="#d8c8a0" stroke-width="0.3" transform="rotate(-35 3.6 3.7)"/></svg></div><div class="t" style="left:97px;top:365px;color:#303030;font-size:10.7px">AddonDirectory</div><div class="a" style="left:77px;top:383px"><svg width="16" height="16" viewBox="0 0 16 16"><path d="M6.3 6.3 L14.8 14.8" stroke="#dcae4a" stroke-width="2.8" stroke-linecap="round"/><path d="M6.3 6.3 L14.8 14.8" stroke="#f4c95c" stroke-width="1.6" stroke-linecap="round"/><circle cx="4.4" cy="4.4" r="3.3" fill="#f3c658" stroke="#e2b04a" stroke-width="0.7"/><ellipse cx="3.6" cy="3.7" rx="1.3" ry="1" fill="#fafafa" stroke="#d8c8a0" stroke-width="0.3" transform="rotate(-35 3.6 3.7)"/></svg></div><div class="t" style="left:97px;top:385px;color:#303030;font-size:10.7px">CloneScheduledDateInClient</div><div class="a" style="left:77px;top:403px"><svg width="16" height="16" viewBox="0 0 16 16"><rect x="0.5" y="0.5" width="15" height="14" fill="#fff" stroke="#8a8a8a"/><rect x="2" y="2" width="12" height="11" fill="#5a9a3c"/><rect x="2.8" y="2.8" width="10.4" height="1" fill="#86b86c"/><rect x="3" y="5" width="2" height="1.1" fill="#eef6e6"/><rect x="6" y="5" width="3" height="1.1" fill="#eef6e6"/><rect x="10" y="5" width="3" height="1.1" fill="#eef6e6"/><rect x="3" y="7" width="2" height="1.1" fill="#eef6e6"/><rect x="6" y="7" width="3" height="1.1" fill="#eef6e6"/><rect x="10" y="7" width="3" height="1.1" fill="#eef6e6"/><rect x="3" y="9" width="2" height="1.1" fill="#eef6e6"/><rect x="6" y="9" width="3" height="1.1" fill="#eef6e6"/><rect x="10" y="9" width="3" height="1.1" fill="#eef6e6"/><rect x="3" y="11" width="2" height="1.1" fill="#eef6e6"/><rect x="6" y="11" width="3" height="1.1" fill="#eef6e6"/><rect x="10" y="11" width="3" height="1.1" fill="#eef6e6"/></svg></div><div class="a" style="left:94px;top:401px;width:176px;height:20px;background:#0078d7;outline:1px dotted #fff;outline-offset:-1px"></div><div class="t" style="left:97px;top:405px;color:#fff;font-size:10.7px">CustomDropDown</div><div class="a" style="left:77px;top:423px"><svg width="16" height="16" viewBox="0 0 16 16"><rect x="0.5" y="0.5" width="15" height="14" fill="#fff" stroke="#8a8a8a"/><rect x="2" y="2" width="12" height="11" fill="#5a9a3c"/><rect x="2.8" y="2.8" width="10.4" height="1" fill="#86b86c"/><rect x="3" y="5" width="2" height="1.1" fill="#eef6e6"/><rect x="6" y="5" width="3" height="1.1" fill="#eef6e6"/><rect x="10" y="5" width="3" height="1.1" fill="#eef6e6"/><rect x="3" y="7" width="2" height="1.1" fill="#eef6e6"/><rect x="6" y="7" width="3" height="1.1" fill="#eef6e6"/><rect x="10" y="7" width="3" height="1.1" fill="#eef6e6"/><rect x="3" y="9" width="2" height="1.1" fill="#eef6e6"/><rect x="6" y="9" width="3" height="1.1" fill="#eef6e6"/><rect x="10" y="9" width="3" height="1.1" fill="#eef6e6"/><rect x="3" y="11" width="2" height="1.1" fill="#eef6e6"/><rect x="6" y="11" width="3" height="1.1" fill="#eef6e6"/><rect x="10" y="11" width="3" height="1.1" fill="#eef6e6"/></svg></div><div class="t" style="left:97px;top:425px;color:#303030;font-size:10.7px">CustomFlags</div><div class="a" style="left:77px;top:443px"><svg width="16" height="16" viewBox="0 0 16 16"><rect x="0.5" y="0.5" width="15" height="14" fill="#fff" stroke="#8a8a8a"/><rect x="2" y="2" width="12" height="11" fill="#5a9a3c"/><rect x="2.8" y="2.8" width="10.4" height="1" fill="#86b86c"/><rect x="3" y="5" width="2" height="1.1" fill="#eef6e6"/><rect x="6" y="5" width="3" height="1.1" fill="#eef6e6"/><rect x="10" y="5" width="3" height="1.1" fill="#eef6e6"/><rect x="3" y="7" width="2" height="1.1" fill="#eef6e6"/><rect x="6" y="7" width="3" height="1.1" fill="#eef6e6"/><rect x="10" y="7" width="3" height="1.1" fill="#eef6e6"/><rect x="3" y="9" width="2" height="1.1" fill="#eef6e6"/><rect x="6" y="9" width="3" height="1.1" fill="#eef6e6"/><rect x="10" y="9" width="3" height="1.1" fill="#eef6e6"/><rect x="3" y="11" width="2" height="1.1" fill="#eef6e6"/><rect x="6" y="11" width="3" height="1.1" fill="#eef6e6"/><rect x="10" y="11" width="3" height="1.1" fill="#eef6e6"/></svg></div><div class="t" style="left:97px;top:445px;color:#303030;font-size:10.7px">Customization</div><div class="a" style="left:77px;top:463px"><svg width="16" height="16" viewBox="0 0 16 16"><path d="M6.3 6.3 L14.8 14.8" stroke="#dcae4a" stroke-width="2.8" stroke-linecap="round"/><path d="M6.3 6.3 L14.8 14.8" stroke="#f4c95c" stroke-width="1.6" stroke-linecap="round"/><circle cx="4.4" cy="4.4" r="3.3" fill="#f3c658" stroke="#e2b04a" stroke-width="0.7"/><ellipse cx="3.6" cy="3.7" rx="1.3" ry="1" fill="#fafafa" stroke="#d8c8a0" stroke-width="0.3" transform="rotate(-35 3.6 3.7)"/></svg></div><div class="t" style="left:97px;top:465px;color:#303030;font-size:10.7px">DocumentTypeOptions</div><div class="a" style="left:77px;top:483px"><svg width="16" height="16" viewBox="0 0 16 16"><path d="M6.3 6.3 L14.8 14.8" stroke="#dcae4a" stroke-width="2.8" stroke-linecap="round"/><path d="M6.3 6.3 L14.8 14.8" stroke="#f4c95c" stroke-width="1.6" stroke-linecap="round"/><circle cx="4.4" cy="4.4" r="3.3" fill="#f3c658" stroke="#e2b04a" stroke-width="0.7"/><ellipse cx="3.6" cy="3.7" rx="1.3" ry="1" fill="#fafafa" stroke="#d8c8a0" stroke-width="0.3" transform="rotate(-35 3.6 3.7)"/></svg></div><div class="t" style="left:97px;top:485px;color:#303030;font-size:10.7px">FutureRoutingDays</div><div class="a" style="left:77px;top:503px"><svg width="16" height="16" viewBox="0 0 16 16"><path d="M6.3 6.3 L14.8 14.8" stroke="#dcae4a" stroke-width="2.8" stroke-linecap="round"/><path d="M6.3 6.3 L14.8 14.8" stroke="#f4c95c" stroke-width="1.6" stroke-linecap="round"/><circle cx="4.4" cy="4.4" r="3.3" fill="#f3c658" stroke="#e2b04a" stroke-width="0.7"/><ellipse cx="3.6" cy="3.7" rx="1.3" ry="1" fill="#fafafa" stroke="#d8c8a0" stroke-width="0.3" transform="rotate(-35 3.6 3.7)"/></svg></div><div class="t" style="left:97px;top:505px;color:#303030;font-size:10.7px">ItemCheckoutSecurityPrompt</div><div class="a" style="left:77px;top:523px"><svg width="16" height="16" viewBox="0 0 16 16"><path d="M6.3 6.3 L14.8 14.8" stroke="#dcae4a" stroke-width="2.8" stroke-linecap="round"/><path d="M6.3 6.3 L14.8 14.8" stroke="#f4c95c" stroke-width="1.6" stroke-linecap="round"/><circle cx="4.4" cy="4.4" r="3.3" fill="#f3c658" stroke="#e2b04a" stroke-width="0.7"/><ellipse cx="3.6" cy="3.7" rx="1.3" ry="1" fill="#fafafa" stroke="#d8c8a0" stroke-width="0.3" transform="rotate(-35 3.6 3.7)"/></svg></div><div class="t" style="left:97px;top:525px;color:#303030;font-size:10.7px">PrintCallslipDocs</div><div class="a" style="left:77px;top:543px"><svg width="16" height="16" viewBox="0 0 16 16"><path d="M6.3 6.3 L14.8 14.8" stroke="#dcae4a" stroke-width="2.8" stroke-linecap="round"/><path d="M6.3 6.3 L14.8 14.8" stroke="#f4c95c" stroke-width="1.6" stroke-linecap="round"/><circle cx="4.4" cy="4.4" r="3.3" fill="#f3c658" stroke="#e2b04a" stroke-width="0.7"/><ellipse cx="3.6" cy="3.7" rx="1.3" ry="1" fill="#fafafa" stroke="#d8c8a0" stroke-width="0.3" transform="rotate(-35 3.6 3.7)"/></svg></div><div class="t" style="left:97px;top:545px;color:#303030;font-size:10.7px">PrintDigitizationRequestDocs</div><div class="a" style="left:77px;top:563px"><svg width="16" height="16" viewBox="0 0 16 16"><path d="M6.3 6.3 L14.8 14.8" stroke="#dcae4a" stroke-width="2.8" stroke-linecap="round"/><path d="M6.3 6.3 L14.8 14.8" stroke="#f4c95c" stroke-width="1.6" stroke-linecap="round"/><circle cx="4.4" cy="4.4" r="3.3" fill="#f3c658" stroke="#e2b04a" stroke-width="0.7"/><ellipse cx="3.6" cy="3.7" rx="1.3" ry="1" fill="#fafafa" stroke="#d8c8a0" stroke-width="0.3" transform="rotate(-35 3.6 3.7)"/></svg></div><div class="t" style="left:97px;top:565px;color:#303030;font-size:10.7px">PrintDocumentsPath</div><div class="a" style="left:77px;top:583px"><svg width="16" height="16" viewBox="0 0 16 16"><path d="M6.3 6.3 L14.8 14.8" stroke="#dcae4a" stroke-width="2.8" stroke-linecap="round"/><path d="M6.3 6.3 L14.8 14.8" stroke="#f4c95c" stroke-width="1.6" stroke-linecap="round"/><circle cx="4.4" cy="4.4" r="3.3" fill="#f3c658" stroke="#e2b04a" stroke-width="0.7"/><ellipse cx="3.6" cy="3.7" rx="1.3" ry="1" fill="#fafafa" stroke="#d8c8a0" stroke-width="0.3" transform="rotate(-35 3.6 3.7)"/></svg></div><div class="t" style="left:97px;top:585px;color:#303030;font-size:10.7px">PrintInvoiceDocs</div><div class="a" style="left:77px;top:603px"><svg width="16" height="16" viewBox="0 0 16 16"><path d="M6.3 6.3 L14.8 14.8" stroke="#dcae4a" stroke-width="2.8" stroke-linecap="round"/><path d="M6.3 6.3 L14.8 14.8" stroke="#f4c95c" stroke-width="1.6" stroke-linecap="round"/><circle cx="4.4" cy="4.4" r="3.3" fill="#f3c658" stroke="#e2b04a" stroke-width="0.7"/><ellipse cx="3.6" cy="3.7" rx="1.3" ry="1" fill="#fafafa" stroke="#d8c8a0" stroke-width="0.3" transform="rotate(-35 3.6 3.7)"/></svg></div><div class="t" style="left:97px;top:605px;color:#303030;font-size:10.7px">PrintInvoiceStatementDocs</div><div class="a" style="left:77px;top:623px"><svg width="16" height="16" viewBox="0 0 16 16"><path d="M6.3 6.3 L14.8 14.8" stroke="#dcae4a" stroke-width="2.8" stroke-linecap="round"/><path d="M6.3 6.3 L14.8 14.8" stroke="#f4c95c" stroke-width="1.6" stroke-linecap="round"/><circle cx="4.4" cy="4.4" r="3.3" fill="#f3c658" stroke="#e2b04a" stroke-width="0.7"/><ellipse cx="3.6" cy="3.7" rx="1.3" ry="1" fill="#fafafa" stroke="#d8c8a0" stroke-width="0.3" transform="rotate(-35 3.6 3.7)"/></svg></div><div class="t" style="left:97px;top:625px;color:#303030;font-size:10.7px">PrintRequestDocs</div><div class="a" style="left:77px;top:643px"><svg width="16" height="16" viewBox="0 0 16 16"><path d="M6.3 6.3 L14.8 14.8" stroke="#dcae4a" stroke-width="2.8" stroke-linecap="round"/><path d="M6.3 6.3 L14.8 14.8" stroke="#f4c95c" stroke-width="1.6" stroke-linecap="round"/><circle cx="4.4" cy="4.4" r="3.3" fill="#f3c658" stroke="#e2b04a" stroke-width="0.7"/><ellipse cx="3.6" cy="3.7" rx="1.3" ry="1" fill="#fafafa" stroke="#d8c8a0" stroke-width="0.3" transform="rotate(-35 3.6 3.7)"/></svg></div><div class="t" style="left:97px;top:645px;color:#303030;font-size:10.7px">PrintSettingsPath</div><div class="a" style="left:77px;top:663px"><svg width="16" height="16" viewBox="0 0 16 16"><path d="M6.3 6.3 L14.8 14.8" stroke="#dcae4a" stroke-width="2.8" stroke-linecap="round"/><path d="M6.3 6.3 L14.8 14.8" stroke="#f4c95c" stroke-width="1.6" stroke-linecap="round"/><circle cx="4.4" cy="4.4" r="3.3" fill="#f3c658" stroke="#e2b04a" stroke-width="0.7"/><ellipse cx="3.6" cy="3.7" rx="1.3" ry="1" fill="#fafafa" stroke="#d8c8a0" stroke-width="0.3" transform="rotate(-35 3.6 3.7)"/></svg></div><div class="t" style="left:97px;top:665px;color:#303030;font-size:10.7px">PrintUserDocs</div><div class="a" style="left:77px;top:683px"><svg width="16" height="16" viewBox="0 0 16 16"><rect x="0.5" y="0.5" width="15" height="14" fill="#fff" stroke="#8a8a8a"/><rect x="2" y="2" width="12" height="11" fill="#5a9a3c"/><rect x="2.8" y="2.8" width="10.4" height="1" fill="#86b86c"/><rect x="3" y="5" width="2" height="1.1" fill="#eef6e6"/><rect x="6" y="5" width="3" height="1.1" fill="#eef6e6"/><rect x="10" y="5" width="3" height="1.1" fill="#eef6e6"/><rect x="3" y="7" width="2" height="1.1" fill="#eef6e6"/><rect x="6" y="7" width="3" height="1.1" fill="#eef6e6"/><rect x="10" y="7" width="3" height="1.1" fill="#eef6e6"/><rect x="3" y="9" width="2" height="1.1" fill="#eef6e6"/><rect x="6" y="9" width="3" height="1.1" fill="#eef6e6"/><rect x="10" y="9" width="3" height="1.1" fill="#eef6e6"/><rect x="3" y="11" width="2" height="1.1" fill="#eef6e6"/><rect x="6" y="11" width="3" height="1.1" fill="#eef6e6"/><rect x="10" y="11" width="3" height="1.1" fill="#eef6e6"/></svg></div><div class="t" style="left:97px;top:685px;color:#303030;font-size:10.7px">ReasonsForCancellation</div><div class="a" style="left:77px;top:703px"><svg width="16" height="16" viewBox="0 0 16 16"><path d="M6.3 6.3 L14.8 14.8" stroke="#dcae4a" stroke-width="2.8" stroke-linecap="round"/><path d="M6.3 6.3 L14.8 14.8" stroke="#f4c95c" stroke-width="1.6" stroke-linecap="round"/><circle cx="4.4" cy="4.4" r="3.3" fill="#f3c658" stroke="#e2b04a" stroke-width="0.7"/><ellipse cx="3.6" cy="3.7" rx="1.3" ry="1" fill="#fafafa" stroke="#d8c8a0" stroke-width="0.3" transform="rotate(-35 3.6 3.7)"/></svg></div><div class="t" style="left:97px;top:705px;color:#303030;font-size:10.7px">SendUserAddedToActivityEmail</div><div class="a" style="left:270px;top:182px;width:15px;height:540px;background:#efefef"></div><div class="a" style="left:270px;top:182px;width:15px;height:16px;background:#fff;border:1px solid #a0a0a0"></div><svg class="a" style="left:274px;top:187px" width="7" height="4" viewBox="0 0 7 4"><path d="M0 4 H7 L3.5 0 Z" fill="#808080"/></svg><div class="a" style="left:270px;top:198px;width:15px;height:351px;background:#fff;border:1px solid #a0a0a0"></div><div class="a" style="left:270px;top:706px;width:15px;height:16px;background:#fff;border:1px solid #a0a0a0"></div><svg class="a" style="left:274px;top:713px" width="7" height="4" viewBox="0 0 7 4"><path d="M0 0 H7 L3.5 4 Z" fill="#808080"/></svg><div class="a" style="left:285px;top:180px;width:718px;height:544px;background:#f7f7f7"></div><div class="a" style="left:2px;top:724px;width:1001px;height:1px;background:#a0a0a0"></div><div class="a" style="left:1px;top:726px;width:1002px;height:1px;background:#dadada"></div><div class="a" style="left:296px;top:181px;width:704px;height:542px;border:1px solid #cdcdcd"></div><div class="a" style="left:298px;top:183px;width:700px;height:538px;border:1px solid #cdcdcd"></div><div class="a" style="left:1001px;top:179px;width:1px;height:546px;background:#a8a8a8"></div><div class="t" style="left:560px;top:201px;color:#800000;font-size:20px;line-height:22px;font-weight:bold">CustomDropDown</div><div class="a" style="left:303px;top:237px;width:689px;height:478px;background:#fff;border:1px solid #a0a0a0"></div><div class="a" style="left:304px;top:238px;width:687px;height:23px;background:#f7f7f7;border-bottom:1px solid #a0a0a0"></div><div class="a" style="left:407px;top:240px;width:1px;height:18px;background:#a8a8a8"></div><div class="a" style="left:663px;top:240px;width:1px;height:18px;background:#a8a8a8"></div><div class="a" style="left:801px;top:240px;width:1px;height:18px;background:#a8a8a8"></div><div class="t" style="left:307px;top:243px;color:#808080;">Group Name</div><div class="t" style="left:410px;top:243px;color:#808080;">Label Name</div><div class="t" style="left:666px;top:243px;color:#808080;">Label Value</div><div class="a" style="left:304px;top:261px;width:498px;height:453px;overflow:hidden"><div class="a" style="left:0;top:0px;width:497px;height:20px;background:#cce4f7;border-bottom:1px solid #d9d9d9"></div><div class="t" style="left:3px;top:3px;font-size:10.7px">ActivityStatus</div><div class="t" style="left:106px;top:3px;font-size:10.7px">Fulfilled</div><div class="t" style="left:362px;top:3px;font-size:10.7px">Fulfilled</div><div class="a" style="left:0;top:20px;width:497px;height:20px;background:#fff;border-bottom:1px solid #d9d9d9"></div><div class="t" style="left:3px;top:23px;font-size:10.7px">ActivityStatus</div><div class="t" style="left:106px;top:23px;font-size:10.7px">In Progress</div><div class="t" style="left:362px;top:23px;font-size:10.7px">In Progress</div><div class="a" style="left:0;top:40px;width:497px;height:20px;background:#fff;border-bottom:1px solid #d9d9d9"></div><div class="t" style="left:3px;top:43px;font-size:10.7px">ActivityType</div><div class="t" style="left:106px;top:43px;font-size:10.7px">Exhibit</div><div class="t" style="left:362px;top:43px;font-size:10.7px">Exhibit</div><div class="a" style="left:0;top:60px;width:497px;height:20px;background:#fff;border-bottom:1px solid #d9d9d9"></div><div class="t" style="left:3px;top:63px;font-size:10.7px">ActivityType</div><div class="t" style="left:106px;top:63px;font-size:10.7px">Presentation</div><div class="t" style="left:362px;top:63px;font-size:10.7px">Presentation</div><div class="a" style="left:0;top:80px;width:497px;height:20px;background:#fff;border-bottom:1px solid #d9d9d9"></div><div class="t" style="left:3px;top:83px;font-size:10.7px">ActivityType</div><div class="t" style="left:106px;top:83px;font-size:10.7px">Project</div><div class="t" style="left:362px;top:83px;font-size:10.7px">Project</div><div class="a" style="left:0;top:100px;width:497px;height:20px;background:#fff;border-bottom:1px solid #d9d9d9"></div><div class="t" style="left:3px;top:103px;font-size:10.7px">AltIDType</div><div class="t" style="left:106px;top:103px;font-size:10.7px">Campus ID</div><div class="t" style="left:362px;top:103px;font-size:10.7px">Campus ID</div><div class="a" style="left:0;top:120px;width:497px;height:20px;background:#fff;border-bottom:1px solid #d9d9d9"></div><div class="t" style="left:3px;top:123px;font-size:10.7px">AltIDType</div><div class="t" style="left:106px;top:123px;font-size:10.7px">Drivers License</div><div class="t" style="left:362px;top:123px;font-size:10.7px">Drivers License</div><div class="a" style="left:0;top:140px;width:497px;height:20px;background:#fff;border-bottom:1px solid #d9d9d9"></div><div class="t" style="left:3px;top:143px;font-size:10.7px">AltIDType</div><div class="t" style="left:106px;top:143px;font-size:10.7px">Military ID</div><div class="t" style="left:362px;top:143px;font-size:10.7px">Military ID</div><div class="a" style="left:0;top:160px;width:497px;height:20px;background:#fff;border-bottom:1px solid #d9d9d9"></div><div class="t" style="left:3px;top:163px;font-size:10.7px">AltIDType</div><div class="t" style="left:106px;top:163px;font-size:10.7px">Passport</div><div class="t" style="left:362px;top:163px;font-size:10.7px">Passport</div><div class="a" style="left:0;top:180px;width:497px;height:20px;background:#fff;border-bottom:1px solid #d9d9d9"></div><div class="t" style="left:3px;top:183px;font-size:10.7px">Country</div><div class="t" style="left:106px;top:183px;font-size:10.7px">Afghanistan</div><div class="t" style="left:362px;top:183px;font-size:10.7px">AF</div><div class="a" style="left:0;top:200px;width:497px;height:20px;background:#fff;border-bottom:1px solid #d9d9d9"></div><div class="t" style="left:3px;top:203px;font-size:10.7px">Country</div><div class="t" style="left:106px;top:203px;font-size:10.7px">&Aring;land Islands</div><div class="t" style="left:362px;top:203px;font-size:10.7px">AX</div><div class="a" style="left:0;top:220px;width:497px;height:20px;background:#fff;border-bottom:1px solid #d9d9d9"></div><div class="t" style="left:3px;top:223px;font-size:10.7px">Country</div><div class="t" style="left:106px;top:223px;font-size:10.7px">Albania</div><div class="t" style="left:362px;top:223px;font-size:10.7px">AL</div><div class="a" style="left:0;top:240px;width:497px;height:20px;background:#fff;border-bottom:1px solid #d9d9d9"></div><div class="t" style="left:3px;top:243px;font-size:10.7px">Country</div><div class="t" style="left:106px;top:243px;font-size:10.7px">Algeria</div><div class="t" style="left:362px;top:243px;font-size:10.7px">DZ</div><div class="a" style="left:0;top:260px;width:497px;height:20px;background:#fff;border-bottom:1px solid #d9d9d9"></div><div class="t" style="left:3px;top:263px;font-size:10.7px">Country</div><div class="t" style="left:106px;top:263px;font-size:10.7px">American Samoa</div><div class="t" style="left:362px;top:263px;font-size:10.7px">AS</div><div class="a" style="left:0;top:280px;width:497px;height:20px;background:#fff;border-bottom:1px solid #d9d9d9"></div><div class="t" style="left:3px;top:283px;font-size:10.7px">Country</div><div class="t" style="left:106px;top:283px;font-size:10.7px">Andorra</div><div class="t" style="left:362px;top:283px;font-size:10.7px">AD</div><div class="a" style="left:0;top:300px;width:497px;height:20px;background:#fff;border-bottom:1px solid #d9d9d9"></div><div class="t" style="left:3px;top:303px;font-size:10.7px">Country</div><div class="t" style="left:106px;top:303px;font-size:10.7px">Angola</div><div class="t" style="left:362px;top:303px;font-size:10.7px">AO</div><div class="a" style="left:0;top:320px;width:497px;height:20px;background:#fff;border-bottom:1px solid #d9d9d9"></div><div class="t" style="left:3px;top:323px;font-size:10.7px">Country</div><div class="t" style="left:106px;top:323px;font-size:10.7px">Anguilla</div><div class="t" style="left:362px;top:323px;font-size:10.7px">AI</div><div class="a" style="left:0;top:340px;width:497px;height:20px;background:#fff;border-bottom:1px solid #d9d9d9"></div><div class="t" style="left:3px;top:343px;font-size:10.7px">Country</div><div class="t" style="left:106px;top:343px;font-size:10.7px">Antarctica</div><div class="t" style="left:362px;top:343px;font-size:10.7px">AQ</div><div class="a" style="left:0;top:360px;width:497px;height:20px;background:#fff;border-bottom:1px solid #d9d9d9"></div><div class="t" style="left:3px;top:363px;font-size:10.7px">Country</div><div class="t" style="left:106px;top:363px;font-size:10.7px">Antigua And Barbuda</div><div class="t" style="left:362px;top:363px;font-size:10.7px">AG</div><div class="a" style="left:0;top:380px;width:497px;height:20px;background:#fff;border-bottom:1px solid #d9d9d9"></div><div class="t" style="left:3px;top:383px;font-size:10.7px">Country</div><div class="t" style="left:106px;top:383px;font-size:10.7px">Argentina</div><div class="t" style="left:362px;top:383px;font-size:10.7px">AR</div><div class="a" style="left:0;top:400px;width:497px;height:20px;background:#fff;border-bottom:1px solid #d9d9d9"></div><div class="t" style="left:3px;top:403px;font-size:10.7px">Country</div><div class="t" style="left:106px;top:403px;font-size:10.7px">Armenia</div><div class="t" style="left:362px;top:403px;font-size:10.7px">AM</div><div class="a" style="left:0;top:420px;width:497px;height:20px;background:#fff;border-bottom:1px solid #d9d9d9"></div><div class="t" style="left:3px;top:423px;font-size:10.7px">Country</div><div class="t" style="left:106px;top:423px;font-size:10.7px">Aruba</div><div class="t" style="left:362px;top:423px;font-size:10.7px">AW</div><div class="a" style="left:0;top:440px;width:497px;height:20px;background:#fff;border-bottom:1px solid #d9d9d9"></div><div class="t" style="left:3px;top:443px;font-size:10.7px">Country</div><div class="t" style="left:106px;top:443px;font-size:10.7px">Australia</div><div class="t" style="left:362px;top:443px;font-size:10.7px">AU</div><div class="a" style="left:103px;top:0;width:1px;height:453px;background:#d9d9d9"></div><div class="a" style="left:359px;top:0;width:1px;height:453px;background:#d9d9d9"></div><div class="a" style="left:497px;top:0;width:1px;height:453px;background:#d9d9d9"></div></div><div class="a" style="left:974px;top:261px;width:17px;height:453px;background:#efefef"></div><div class="a" style="left:975px;top:262px;width:15px;height:16px;background:#fff;border:1px solid #a0a0a0"></div><svg class="a" style="left:979px;top:267px" width="7" height="4" viewBox="0 0 7 4"><path d="M0 4 H7 L3.5 0 Z" fill="#808080"/></svg><div class="a" style="left:975px;top:278px;width:15px;height:28px;background:#fff;border:1px solid #a0a0a0"></div><div class="a" style="left:975px;top:697px;width:15px;height:16px;background:#fff;border:1px solid #a0a0a0"></div><svg class="a" style="left:979px;top:704px" width="7" height="4" viewBox="0 0 7 4"><path d="M0 0 H7 L3.5 4 Z" fill="#808080"/></svg><div class="a" style="left:1px;top:727px;width:1002px;height:21px;background:#efefef"></div><div class="a" style="left:996px;top:733px;width:2px;height:2px;background:#a8a8a8"></div><div class="a" style="left:992px;top:737px;width:2px;height:2px;background:#a8a8a8"></div><div class="a" style="left:996px;top:737px;width:2px;height:2px;background:#a8a8a8"></div><div class="a" style="left:988px;top:741px;width:2px;height:2px;background:#a8a8a8"></div><div class="a" style="left:992px;top:741px;width:2px;height:2px;background:#a8a8a8"></div><div class="a" style="left:996px;top:741px;width:2px;height:2px;background:#a8a8a8"></div></body></html>
